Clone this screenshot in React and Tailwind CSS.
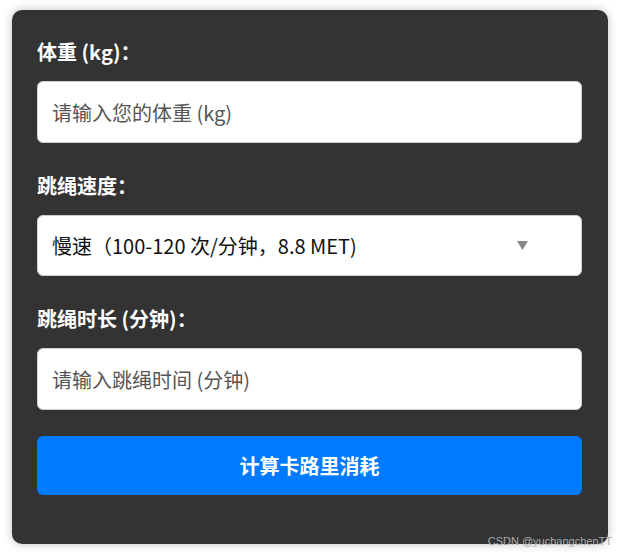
import React, { useState } from "react";

const font = { fontFamily: '"Noto Sans CJK SC", "Noto Sans", sans-serif' };

function Field({ label, children }) {
  return (
    <div className="mb-[30px]">
      <label className="block text-[20px] leading-[26px] font-bold text-white mb-[16px]">
        {label}
      </label>
      {children}
    </div>
  );
}

export default function App() {
  const [weight, setWeight] = useState("");
  const [speed, setSpeed] = useState("slow");
  const [minutes, setMinutes] = useState("");

  return (
    <div className="relative w-[617px] h-[553px] bg-white overflow-hidden" style={font}>
      <div className="ml-[12px] mt-[10px] w-[596px] h-[534px] rounded-[10px] bg-[#333333] shadow-[0_0_10px_rgba(0,0,0,0.25)] pl-[25px] pr-[26px] pt-[29px]">
        <Field label="体重 (kg)：">
          <input
            type="number"
            value={weight}
            onChange={(e) => setWeight(e.target.value)}
            placeholder="请输入您的体重 (kg)"
            className="block w-full h-[62px] rounded-[6px] border border-[#cfcfcf] bg-white px-[14px] text-[20px] text-[#222] placeholder:text-[#555] outline-none"
          />
        </Field>

        <Field label="跳绳速度：">
          <div className="relative">
            <select
              value={speed}
              onChange={(e) => setSpeed(e.target.value)}
              className="block w-full h-[61px] appearance-none rounded-[6px] border border-[#cfcfcf] bg-white px-[14px] text-[20px] text-[#111] outline-none"
            >
              <option value="slow">慢速（100-120 次/分钟，8.8 MET)</option>
              <option value="mid">中速（120-160 次/分钟，11.8 MET)</option>
              <option value="fast">快速（160+ 次/分钟，12.3 MET)</option>
            </select>
            <svg
              className="absolute left-[480px] top-[26px] pointer-events-none"
              width="11"
              height="9"
              viewBox="0 0 11 9"
            >
              <path d="M0 0 H11 L5.5 9 Z" fill="#888" />
            </svg>
          </div>
        </Field>

        <Field label="跳绳时长 (分钟)：">
          <input
            type="number"
            value={minutes}
            onChange={(e) => setMinutes(e.target.value)}
            placeholder="请输入跳绳时间 (分钟)"
            className="block w-full h-[62px] rounded-[6px] border border-[#cfcfcf] bg-white px-[14px] text-[20px] text-[#222] placeholder:text-[#555] outline-none"
          />
        </Field>

        <button
          type="button"
          className="-mt-[4px] block w-full h-[59px] rounded-[6px] bg-[#007bff] text-white text-[20px] font-bold"
        >
          计算卡路里消耗
        </button>
      </div>

      <span
        className="absolute right-[5px] bottom-[5px] text-[11px] leading-[14px] text-[#aaa]"
        style={{ fontFamily: '"Liberation Sans", sans-serif' }}
      >
        CSDN @yuchangchenTT
      </span>
    </div>
  );
}
